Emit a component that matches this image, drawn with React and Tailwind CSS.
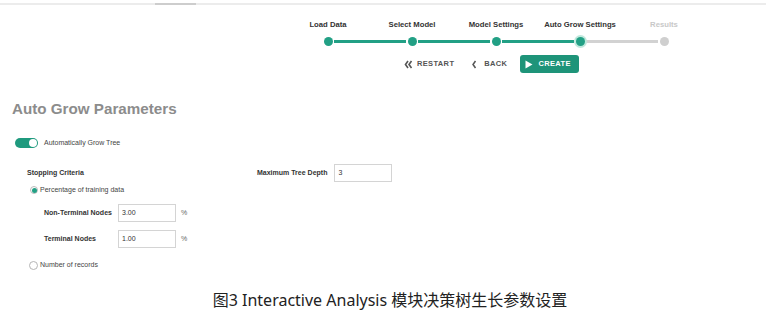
import React from "react";

function Step({ label, state, left, right }) {
  return (
    <div className="flex flex-col items-center">
      <div
        className={
          "h-[9px] leading-[9px] text-[7.7px] font-bold whitespace-nowrap " +
          (state === "todo" ? "text-[#c8c8c8]" : "text-[#333333]")
        }
      >
        {label}
      </div>
      <div className="mt-[6px] flex h-[12px] w-full items-center">
        <div className={"h-[3px] flex-1 " + left}></div>
        <div className="relative flex h-[12px] w-[12px] items-center justify-center">
          {state === "active" && (
            <div className="absolute h-[13px] w-[13px] rounded-full bg-[#bfe8dc]"></div>
          )}
          <div
            className={
              "relative h-[9px] w-[9px] rounded-full " +
              (state === "todo" ? "bg-[#cfcfcf]" : "bg-[#22a085]")
            }
          ></div>
        </div>
        <div className={"h-[3px] flex-1 " + right}></div>
      </div>
    </div>
  );
}

export default function App() {
  return (
    <div
      className="relative h-[325px] w-[766px] overflow-hidden bg-white"
      style={{ fontFamily: '"Liberation Sans", Arial, sans-serif' }}
    >
      {/* top rule */}
      <div className="mt-[3px] h-[2px] w-full bg-[#ececec]">
        <div className="ml-[155px] h-full w-[41px] bg-[#cdcdcd]"></div>
      </div>

      {/* stepper */}
      <div className="ml-[286px] mt-[15px] grid w-[420px] grid-cols-5">
        <Step label="Load Data" state="done" left="bg-transparent" right="bg-[#22a085]" />
        <Step label="Select Model" state="done" left="bg-[#22a085]" right="bg-[#22a085]" />
        <Step label="Model Settings" state="done" left="bg-[#22a085]" right="bg-[#22a085]" />
        <Step label="Auto Grow Settings" state="active" left="bg-[#22a085]" right="bg-[#d2d2d2]" />
        <Step label="Results" state="todo" left="bg-[#d2d2d2]" right="bg-transparent" />
      </div>

      {/* buttons */}
      <div className="ml-[404px] mt-[8px] flex h-[18px] items-center">
        <div className="flex items-center text-[#555555]">
          <svg width="9" height="9" viewBox="0 0 9 9">
            <path d="M4 1 L1.5 4.5 L4 8" stroke="#555" strokeWidth="1.6" fill="none" />
            <path d="M7.5 1 L5 4.5 L7.5 8" stroke="#555" strokeWidth="1.6" fill="none" />
          </svg>
          <span className="ml-[4px] text-[7.5px] font-bold tracking-[0.35px]">RESTART</span>
        </div>
        <div className="ml-[17px] flex items-center text-[#555555]">
          <svg width="6" height="9" viewBox="0 0 6 9">
            <path d="M4.5 1 L2 4.5 L4.5 8" stroke="#555" strokeWidth="1.5" fill="none" />
          </svg>
          <span className="ml-[7px] text-[7.5px] font-bold tracking-[0.35px]">BACK</span>
        </div>
        <div className="ml-[13px] flex h-[18px] w-[59px] items-center rounded-[3px] bg-[#1e9479] pl-[5px]">
          <svg width="8" height="9" viewBox="0 0 8 9">
            <path d="M0.5 0.5 L7.5 4.5 L0.5 8.5 Z" fill="#ffffff" />
          </svg>
          <span className="ml-[5px] text-[7.5px] font-bold tracking-[0.35px] text-white">CREATE</span>
        </div>
      </div>

      {/* title */}
      <div className="ml-[12px] mt-[27px] h-[18px] text-[15.2px] font-bold leading-[18px] text-[#8c8c8c]">
        Auto Grow Parameters
      </div>

      {/* toggle */}
      <div className="ml-[15px] mt-[20px] flex h-[10px] items-center">
        <div className="flex h-[10px] w-[23px] items-center justify-end rounded-full bg-[#1f9a7e] pr-[1px]">
          <div className="h-[8px] w-[8px] rounded-full bg-white"></div>
        </div>
        <span className="ml-[6px] text-[7px] text-[#444444]">Automatically Grow Tree</span>
      </div>

      {/* settings */}
      <div className="mt-[16px] flex">
        <div className="w-[257px]">
          <div className="ml-[27px] flex h-[18px] items-center text-[7px] font-bold text-[#333333]">
            Stopping Criteria
          </div>
          <div className="ml-[30px] mt-[3px] flex h-[10px] items-center">
            <div className="flex h-[8px] w-[8px] items-center justify-center rounded-full border border-[#bbbbbb] bg-white">
              <div className="h-[5px] w-[5px] rounded-full bg-[#22a085]"></div>
            </div>
            <span className="ml-[2px] text-[7px] text-[#444444]">Percentage of training data</span>
          </div>
          <div className="ml-[44px] mt-[9px] flex h-[18px] items-center">
            <span className="w-[74px] text-[7px] font-bold text-[#333333]">Non-Terminal Nodes</span>
            <div className="flex h-[18px] w-[58px] items-center border border-[#d4d4d4] bg-white pl-[3px] text-[7px] text-[#333333]">
              3.00
            </div>
            <span className="ml-[5px] text-[7px] text-[#666666]">%</span>
          </div>
          <div className="ml-[44px] mt-[8px] flex h-[18px] items-center">
            <span className="w-[74px] text-[7px] font-bold text-[#333333]">Terminal Nodes</span>
            <div className="flex h-[18px] w-[58px] items-center border border-[#d4d4d4] bg-white pl-[3px] text-[7px] text-[#333333]">
              1.00
            </div>
            <span className="ml-[5px] text-[7px] text-[#666666]">%</span>
          </div>
          <div className="ml-[29px] mt-[12px] flex h-[10px] items-center">
            <div className="h-[9px] w-[9px] rounded-full border border-[#b5b5b5] bg-white"></div>
            <span className="ml-[2px] text-[7px] text-[#444444]">Number of records</span>
          </div>
        </div>
        <div className="flex h-[18px] items-center">
          <span className="text-[7px] font-bold text-[#333333]">Maximum Tree Depth</span>
          <div className="ml-[7px] flex h-[18px] w-[58px] items-center border border-[#d4d4d4] bg-white pl-[3px] text-[7px] text-[#333333]">
            3
          </div>
        </div>
      </div>

      {/* caption */}
      <div
        className="mt-[20px] w-full pl-[14px] text-center text-[16px] leading-[20px] text-[#222222]"
        style={{ fontFamily: '"Noto Sans", "Noto Sans CJK SC", sans-serif' }}
      >
        图3 Interactive Analysis 模块决策树生长参数设置
      </div>
    </div>
  );
}
